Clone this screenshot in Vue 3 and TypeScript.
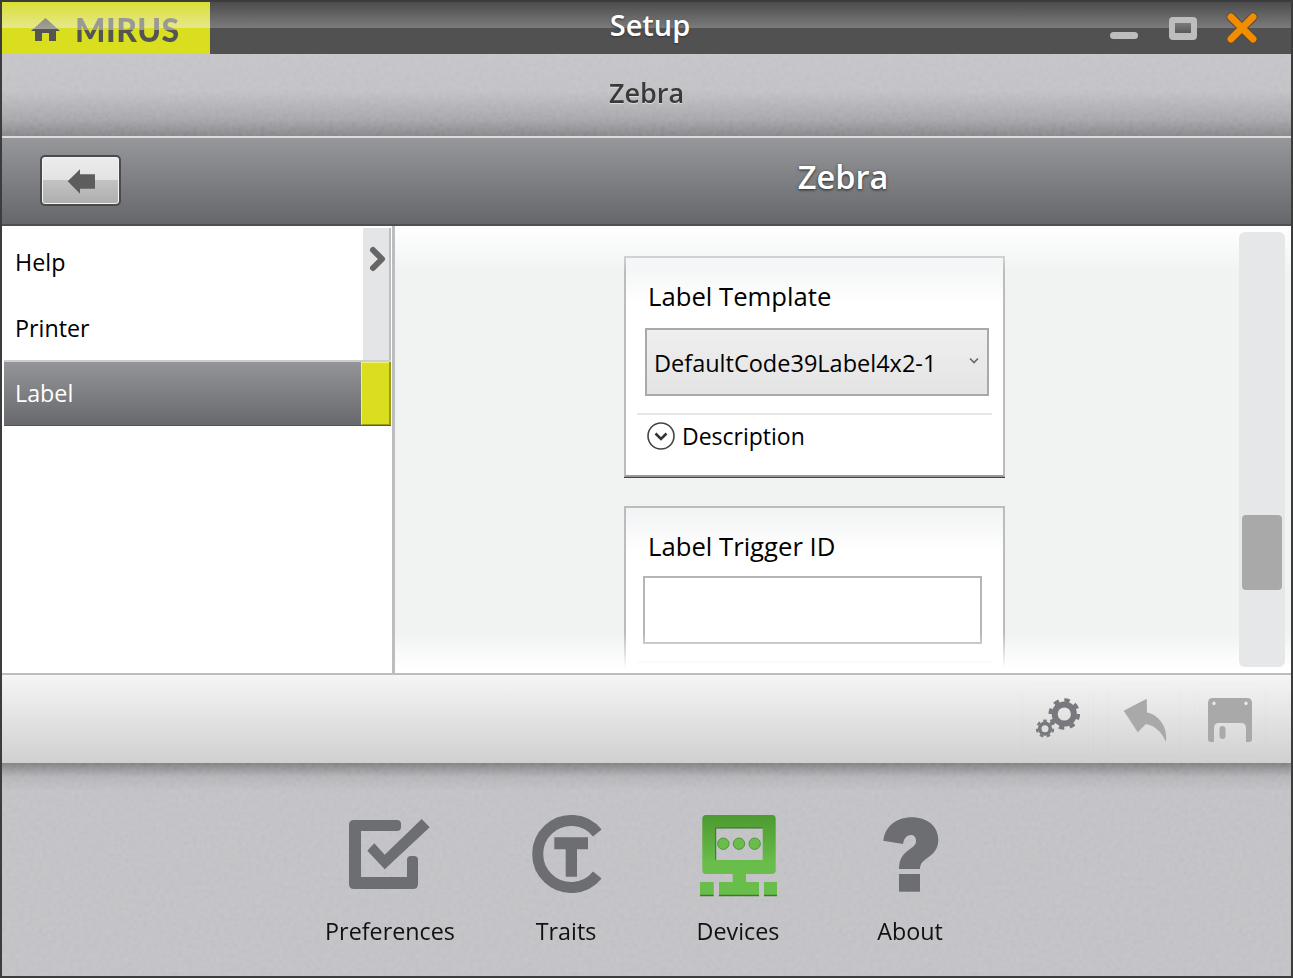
<script setup lang="ts">
const rows: string[] = ['Help', 'Printer']
</script>

<template>
  <div class="window">
    <header class="titlebar">
      <div class="logo">
        <svg class="home" viewBox="31 16 30 24" width="30" height="24">
          <defs>
            <linearGradient id="hg" x1="0" y1="0" x2="0" y2="1">
              <stop offset="0" stop-color="#8d8d88" />
              <stop offset="0.5" stop-color="#a2a298" />
              <stop offset="0.5" stop-color="#555" />
              <stop offset="1" stop-color="#555" />
            </linearGradient>
          </defs>
          <path d="M31 29 L45.5 16 L60 29 H56 V39 H49 V31 H42 V39 H35 V29 Z" fill="url(#hg)" />
        </svg>
        <span class="logo-text">MIRUS</span>
      </div>
      <div class="title">Setup</div>
      <div class="win-controls">
        <span class="min"></span>
        <span class="max"></span>
        <svg viewBox="0 0 32 32" width="32" height="32" class="close">
          <path d="M5 5 L27 27 M27 5 L5 27" stroke="#5a4a38" stroke-width="9" stroke-linecap="round" />
          <path d="M5 5 L27 27 M27 5 L5 27" stroke="#f28c00" stroke-width="7" stroke-linecap="round" />
        </svg>
      </div>
    </header>

    <div class="subheader noise">Zebra</div>

    <div class="band">
      <div class="band-left">
        <button class="back">
          <svg viewBox="65 165 32 30" width="32" height="30">
            <path d="M67.7 180.3 L80 168.3 V173.3 H95 V187.7 H80 V192.7 Z" fill="#5d5d5d" />
          </svg>
        </button>
      </div>
      <div class="band-title">Zebra</div>
    </div>

    <div class="middle">
      <aside class="side">
        <div class="side-top">
          <ul class="list">
            <li v-for="r in rows" :key="r">{{ r }}</li>
          </ul>
          <div class="strip">
            <svg viewBox="0 0 26 30" width="26" height="30">
              <path d="M10 6 L19 15 L10 24" fill="none" stroke="#666" stroke-width="6" stroke-linecap="round" stroke-linejoin="round" />
            </svg>
          </div>
        </div>
        <div class="selected">
          <span class="sel-text">Label</span>
          <span class="sel-mark"></span>
        </div>
      </aside>

      <main class="panel">
        <section class="card first">
          <h3>Label Template</h3>
          <div class="select">
            <span>DefaultCode39Label4x2-1</span>
            <svg viewBox="0 0 10 8" width="10" height="8">
              <path d="M1 1.5 L5 5.5 L9 1.5" fill="none" stroke="#666" stroke-width="1.6" />
            </svg>
          </div>
          <div class="divider"></div>
          <div class="desc">
            <svg viewBox="0 0 28 28" width="28" height="28">
              <circle cx="14" cy="14" r="13" fill="#fff" stroke="#444" stroke-width="1.6" />
              <path d="M8.5 11.5 L14 17 L19.5 11.5" fill="none" stroke="#333" stroke-width="2.6" />
            </svg>
            <span>Description</span>
          </div>
        </section>

        <section class="card second">
          <h3>Label Trigger ID</h3>
          <input class="text-input" type="text" />
          <div class="divider"></div>
        </section>

        <div class="fade-top"></div>
        <div class="fade-bottom"></div>
        <div class="track"><div class="thumb"></div></div>
      </main>
    </div>

    <div class="toolbar">
      <button class="tool">
        <svg viewBox="1022 684 72 72" width="72" height="72">
          <g fill="none" stroke="#77797d">
            <circle cx="1064.3" cy="714" r="9.6" stroke-width="6" />
            <circle cx="1064.3" cy="714" r="14" stroke-width="3.6" pathLength="16" stroke-dasharray="1 1" />
            <circle cx="1045" cy="728.7" r="5.3" stroke-width="3.6" />
            <circle cx="1045" cy="728.7" r="8" stroke-width="2.2" pathLength="14" stroke-dasharray="1 1" />
          </g>
        </svg>
      </button>
      <button class="tool">
        <svg viewBox="1108 684 72 72" width="72" height="72">
          <path d="M1123.7 710.7 L1146.7 698.7 L1147 712.5 C1159 715 1168 727 1166 742 C1161 731 1155 726 1146 724 L1137.7 732.3 Z" fill="#a9a9a9" />
        </svg>
      </button>
      <button class="tool">
        <svg viewBox="1194 684 72 72" width="72" height="72">
          <path fill-rule="evenodd" fill="#a9a9a9" d="M1213 698 H1247 Q1252 698 1252 703 V739 Q1252 742 1249 742 H1246 V728 Q1246 723 1241 723 H1219 Q1214 723 1214 728 V742 H1211 Q1208 742 1208 739 V703 Q1208 698 1213 698 Z M1214 701.6 a1.7 1.7 0 1 0 0.01 0 Z M1246 701.6 a1.7 1.7 0 1 0 0.01 0 Z" />
          <rect x="1219.5" y="726" width="6" height="13" rx="3" fill="#a9a9a9" />
        </svg>
      </button>
    </div>

    <nav class="bottom noise">
      <a class="item">
        <svg viewBox="340 812 100 88" width="100" height="88">
          <path fill="#6d6e71" d="M354 820 H397 Q401 820 401 824 V827 Q401 831 397 831 H361 V877 H407 V860 Q407 856 411 856 H414 Q418 856 418 860 V884 Q418 889 413 889 H354 Q349 889 349 884 V825 Q349 820 354 820 Z" />
          <path fill="#6d6e71" d="M367.3 850.7 L374.3 843.3 L384.7 854.7 L421.7 819 L429.7 827.3 L384.7 869.3 Z" />
        </svg>
        <span>Preferences</span>
      </a>
      <a class="item">
        <svg viewBox="516 812 100 88" width="100" height="88">
          <path d="M597.3 833 A33.5 33.5 0 1 0 597.3 875" fill="none" stroke="#6d6e71" stroke-width="11" />
          <path fill="#6d6e71" d="M554.3 837.3 H588 V849.3 H577 V876.7 H565.7 V849.3 H554.3 Z" />
        </svg>
        <span>Traits</span>
      </a>
      <a class="item">
        <svg viewBox="688 812 100 88" width="100" height="88" class="devices">
          <defs>
            <linearGradient id="dg" x1="0" y1="0" x2="0" y2="1">
              <stop offset="0" stop-color="#4c9a30" />
              <stop offset="0.6" stop-color="#69bd4a" />
              <stop offset="1" stop-color="#69bd4a" />
            </linearGradient>
          </defs>
          <path fill="url(#dg)" fill-rule="evenodd" d="M706 815 H772 Q775.7 815 775.7 819 V870 Q775.7 874 772 874 H746 V882 H759 V895 H719 V882 H732.7 V874 H706 Q702.3 874 702.3 870 V819 Q702.3 815 706 815 Z M715.7 828 V860 H762.7 V828 Z" />
          <path d="M715.7 828 H762.7 M715.7 828 V860" stroke="#3c6b28" stroke-width="1" fill="none" />
          <circle cx="723.3" cy="843.7" r="5.7" fill="#69bd4a" stroke="#3f8a2a" stroke-width="0.8" />
          <circle cx="739" cy="843.7" r="5.7" fill="#69bd4a" stroke="#3f8a2a" stroke-width="0.8" />
          <circle cx="754.7" cy="843.7" r="5.7" fill="#69bd4a" stroke="#3f8a2a" stroke-width="0.8" />
          <rect x="700" y="882" width="13.7" height="13" fill="#69bd4a" />
          <rect x="764" y="882" width="13" height="13" fill="#69bd4a" />
          <path d="M700 895.5 H713.7 M719 895.5 H759 M764 895.5 H777" stroke="#3d7a29" stroke-width="1.4" />
        </svg>
        <span>Devices</span>
      </a>
      <a class="item">
        <svg viewBox="860 812 100 88" width="100" height="88">
          <path fill="#6d6e71" d="M883.3 840.7 C885 826 897 817.3 911.7 817.3 C927 817.3 938.3 826 938.3 840 C938.3 851 931 855 926 859 C922 862 920 864 920 869 H899 C899 860 902 855 908 850.5 C913 847 916 845 916 841 C916 837 914 835 911 835 C907 835 904 838 903 844 Z" />
          <rect x="899" y="874" width="21" height="17.7" fill="#6d6e71" />
        </svg>
        <span>About</span>
      </a>
    </nav>
  </div>
</template>

<style>
html, body { margin: 0; background: #3a3a3a; }
</style>

<style scoped>
* { box-sizing: border-box; }
.window {
  width: 1293px;
  height: 978px;
  border: 2px solid #3c3c3c;
  display: flex;
  flex-direction: column;
  overflow: hidden;
  font-family: "Open Sans", "Noto Sans", sans-serif;
  color: #000;
}
.noise { position: relative; isolation: isolate; }
.noise::after {
  content: "";
  position: absolute;
  inset: 0;
  pointer-events: none;
  background-image: url("data:image/svg+xml,%3Csvg xmlns='http://www.w3.org/2000/svg' width='400' height='400'%3E%3Cfilter id='n'%3E%3CfeTurbulence type='fractalNoise' baseFrequency='.22' numOctaves='2'/%3E%3CfeColorMatrix values='1 0 0 0 0 1 0 0 0 0 1 0 0 0 0 0 0 0 0 1'/%3E%3C/filter%3E%3Crect width='400' height='400' filter='url(%23n)'/%3E%3C/svg%3E");
  mix-blend-mode: soft-light;
  opacity: 0.22;
}

.titlebar {
  height: 52px;
  flex: none;
  display: flex;
  position: relative;
  background: linear-gradient(#4c4c4c 0, #7b7b7b 26px, #515151 26px, #515151 100%);
}
.logo {
  width: 208px;
  display: flex;
  align-items: center;
  padding: 3px 0 0 29px;
  gap: 14px;
  background: linear-gradient(#dcdf33 0, #e5e88c 26px, #d9df1f 26px, #d9df1f 100%);
}
.home { display: block; }
.logo-text {
  font-family: "Lato", sans-serif;
  font-weight: 900;
  font-size: 32px;
  letter-spacing: 0.5px;
  line-height: 52px;
  background: linear-gradient(#9a9a92 0, #9a9a92 23px, #545454 23px);
  background-position: 0 3px;
  background-repeat: no-repeat;
  background-color: #545454;
  -webkit-background-clip: text;
  background-clip: text;
  color: transparent;
}
.title {
  flex: 1;
  padding-right: 201px;
  text-align: center;
  color: #fff;
  font-size: 29px;
  font-weight: 600;
  line-height: 46px;
  text-shadow: 0 1px 2px #333;
}
.win-controls { position: absolute; left: 0; top: 0; width: 0; }
.min, .max, .close { position: absolute; }
.min {
  left: 1108px;
  top: 30px;
  width: 28px;
  height: 7px;
  border-radius: 4px;
  background: #bdbdbd;
}
.max {
  left: 1167px;
  top: 15px;
  width: 28px;
  height: 23px;
  border-radius: 4px;
  background: linear-gradient(#7a7a7a, #5a5a5a) 6px 6px / 16px 10px no-repeat, #bdbdbd;
}
.close { left: 1224px; top: 10px; }

.subheader {
  height: 82px;
  flex: none;
  text-align: center;
  font-size: 27px;
  font-weight: 600;
  line-height: 78px;
  color: #333;
  text-shadow: 0 1px 1px #ddd;
  background: linear-gradient(#c3c3c8 0, #c1c1c5 45%, #a6a6aa 80%, #86868a 100%);
}

.band {
  height: 90px;
  flex: none;
  display: flex;
  border-top: 2px solid #dcdcdc;
  border-bottom: 2px solid #4f5053;
  background: linear-gradient(#96979a, #66676a);
}
.band-left {
  width: 393px;
  padding: 17px 0 0 38px;
}
.back {
  width: 81px;
  height: 51px;
  padding: 0;
  display: flex;
  align-items: center;
  justify-content: center;
  border: 2px solid #4a4a4c;
  border-radius: 5px;
  box-shadow: inset 0 0 0 1px #f4f4f4;
  background: linear-gradient(#ececec 0, #e2e2e2 50%, #c2c2c2 50%, #aeaeae 100%);
}
.back svg { display: block; }
.band-title {
  flex: 1;
  text-align: center;
  font-size: 32.5px;
  font-weight: 600;
  line-height: 78px;
  color: #fff;
  text-shadow: 0 1px 3px #222;
}

.middle {
  height: 447px;
  flex: none;
  display: flex;
  background: #fff;
}
.side {
  width: 393px;
  flex: none;
  border-right: 3px solid #bcbdbf;
  display: flex;
  flex-direction: column;
  padding-right: 1px;
}
.side-top {
  height: 134px;
  flex: none;
  display: flex;
}
.list {
  list-style: none;
  margin: 0;
  padding: 3px 0 0 13px;
  width: 361px;
  font-size: 23.3px;
  height: 134px;
}
.list li { height: 66px; line-height: 66px; }
.strip {
  width: 28px;
  margin-top: 2px;
  background: #e4e5e7;
  border-right: 2px solid #bcbdbf;
  padding-top: 16px;
}
.strip svg { display: block; }
.selected {
  height: 66px;
  flex: none;
  margin-left: 2px;
  display: flex;
  border-top: 2px solid #cdcdcf;
  border-bottom: 1px solid #56575a;
  background: linear-gradient(#949599, #68696c);
}
.sel-text {
  flex: 1;
  padding-left: 11px;
  color: #fff;
  font-size: 23.3px;
  line-height: 63px;
}
.sel-mark {
  width: 30px;
  background: #d9df1f;
  border-left: 1px solid #f3f37a;
  border-right: 2px solid #9c9c14;
  border-bottom: 1px solid #9c9c14;
  box-shadow: inset 0 1px 0 #f3f37a;
}

.panel {
  flex: 1;
  min-width: 0;
  position: relative;
  overflow: hidden;
  background: #f1f3f3;
  padding: 30px 0 0 229px;
}
.card {
  width: 381px;
  border: 2px solid #bbbcbe;
  background: linear-gradient(#f2f3f4 0, #fff 45px);
  padding-left: 11px;
  padding-right: 11px;
}
.card h3 {
  margin: 0;
  font-size: 25.7px;
  font-weight: 400;
  padding: 0 0 0 11px;
  line-height: 36px;
}
.first {
  height: 221px;
  padding-top: 21px;
  box-shadow: 0 1px 0 #444;
  border-bottom-color: #9a9a9a;
}
.select {
  width: 344px;
  height: 68px;
  margin: 13px 0 0 8px;
  border: 2px solid #a9a9ab;
  background: linear-gradient(#efefef, #e4e4e5);
  display: flex;
  align-items: center;
  justify-content: space-between;
  padding: 1px 8px 0 7px;
  font-size: 23.5px;
}
.select svg { margin-bottom: 3px; }
.divider {
  height: 2px;
  background: #e6e6e7;
  margin-top: 17px;
}
.desc {
  display: flex;
  align-items: center;
  gap: 7px;
  padding: 6px 0 0 10px;
  font-size: 23px;
  line-height: 30px;
}
.desc svg { display: block; }
.second {
  height: 240px;
  margin-top: 29px;
  padding-top: 21px;
}
.text-input {
  display: block;
  width: 339px;
  height: 68px;
  margin: 11px 0 0 6px;
  border: 2px solid #b4b5b9;
  background: #fff;
  border-radius: 0;
  outline: none;
}
.fade-top {
  position: absolute;
  left: 0;
  right: 0;
  top: 0;
  height: 46px;
  background: linear-gradient(#fff, rgba(255, 255, 255, 0));
  pointer-events: none;
}
.fade-bottom {
  position: absolute;
  left: 0;
  right: 0;
  bottom: 0;
  height: 40px;
  background: linear-gradient(rgba(255, 255, 255, 0), #fff 90%);
  pointer-events: none;
}
.track {
  position: absolute;
  left: 844px;
  top: 6px;
  width: 46px;
  height: 435px;
  background: #e6e7e8;
  border-radius: 6px;
}
.thumb {
  position: absolute;
  left: 3px;
  top: 283px;
  width: 40px;
  height: 75px;
  border-radius: 4px;
  background: #a9a9a9;
}

.toolbar {
  height: 90px;
  flex: none;
  display: flex;
  justify-content: flex-end;
  align-items: flex-start;
  gap: 14px;
  padding: 9px 25px 0 0;
  border-top: 2px solid #bcbdbf;
  background: linear-gradient(#f5f5f5, #d0d0d0);
}
.tool {
  width: 72px;
  height: 72px;
  padding: 0;
  border: 1px solid rgba(0, 0, 0, 0.012);
  border-radius: 8px;
  background: transparent;
  display: block;
}
.tool svg { display: block; margin: -1px; }

.bottom {
  flex: 1;
  min-height: 0;
  display: grid;
  grid-template-columns: 176px 176px 168px 176px;
  justify-content: center;
  background: linear-gradient(#808083 0, #b4b4b8 14px, #c1c1c5 28px, #c1c1c5 100%);
  padding: 49px 0 0 7px;
}
.item {
  display: flex;
  flex-direction: column;
  align-items: center;
  position: relative;
  z-index: 1;
  font-size: 23.3px;
  color: #111;
}
.item svg { display: block; flex: none; }
.item span { margin-top: 14px; line-height: 34px; }
</style>
